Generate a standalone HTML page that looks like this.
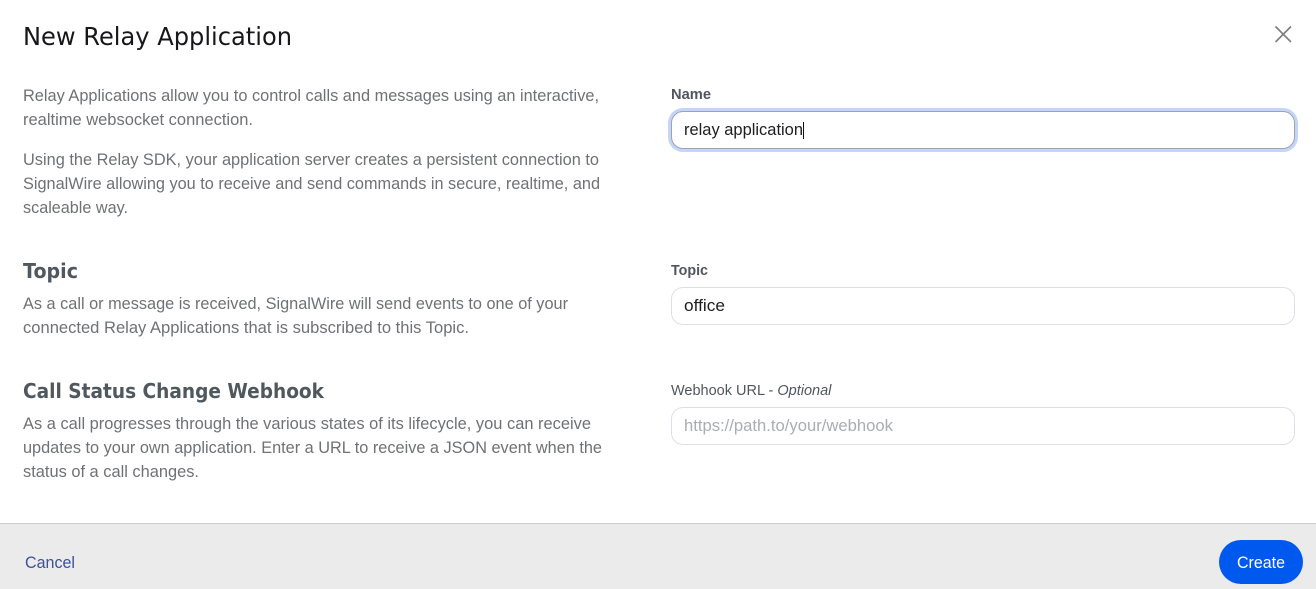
<!DOCTYPE html>
<html lang="en">
<head>
<meta charset="utf-8">
<title>New Relay Application</title>
<style>
html,body{margin:0;padding:0;width:1316px;height:589px;overflow:hidden;background:#fff}
.box{position:absolute;left:671px;width:624px;height:38px;box-sizing:border-box;border:1px solid #dcdfe5;border-radius:12px;background:#fff}
#focus{top:111px;border:1px solid #a0a2ae;box-shadow:0 0 0 3px #c3d5f8}
#caret{position:absolute;left:803px;top:122px;width:1px;height:17px;background:#111}
#footer{position:absolute;left:0;top:523px;width:1316px;height:66px;box-sizing:border-box;background:#ebebeb;border-top:1px solid #cdcdcd}
#btn{position:absolute;left:1219px;top:540px;width:84px;height:44px;border-radius:22px;background:#0059ee}
svg{position:absolute;left:0;top:0}
text{font-family:"Liberation Sans",sans-serif;font-size:16.5px;fill:#6f7175}
.h{font-family:"DejaVu Sans","Liberation Sans",sans-serif;font-weight:700;font-size:20px;fill:#50585f}
.l{font-size:14.5px;font-weight:700;fill:#50565f}
.v{fill:#1e1e20}
</style>
</head>
<body>
<div class="box" id="focus"></div>
<div id="caret"></div>
<div class="box" style="top:287px"></div>
<div class="box" style="top:407px"></div>
<div id="footer"></div>
<div id="btn"></div>
<svg width="1316" height="589" viewBox="0 0 1316 589" xmlns="http://www.w3.org/2000/svg">
<text x="23" y="45" textLength="269" lengthAdjust="spacingAndGlyphs" style="font-family:'DejaVu Sans',sans-serif;font-size:25px;fill:#17171a">New Relay Application</text>
<path d="M1275.500 26.500L1291 42M1291 26.500L1275.500 42" stroke="#808080" stroke-width="1.700" fill="none"/>

<text x="23" y="101" textLength="576" lengthAdjust="spacingAndGlyphs">Relay Applications allow you to control calls and messages using an interactive,</text>
<text x="23" y="125" textLength="230" lengthAdjust="spacingAndGlyphs">realtime websocket connection.</text>
<text x="23" y="165" textLength="576" lengthAdjust="spacingAndGlyphs">Using the Relay SDK, your application server creates a persistent connection to</text>
<text x="23" y="189" textLength="577" lengthAdjust="spacingAndGlyphs">SignalWire allowing you to receive and send commands in secure, realtime, and</text>
<text x="23" y="213" textLength="105" lengthAdjust="spacingAndGlyphs">scaleable way.</text>

<text class="h" x="23" y="278" textLength="55" lengthAdjust="spacingAndGlyphs">Topic</text>
<text x="23" y="309" textLength="545" lengthAdjust="spacingAndGlyphs">As a call or message is received, SignalWire will send events to one of your</text>
<text x="23" y="333" textLength="446" lengthAdjust="spacingAndGlyphs">connected Relay Applications that is subscribed to this Topic.</text>

<text class="h" x="23" y="398" textLength="301" lengthAdjust="spacingAndGlyphs">Call Status Change Webhook</text>
<text x="23" y="429" textLength="568" lengthAdjust="spacingAndGlyphs">As a call progresses through the various states of its lifecycle, you can receive</text>
<text x="23" y="453" textLength="579" lengthAdjust="spacingAndGlyphs">updates to your own application. Enter a URL to receive a JSON event when the</text>
<text x="23" y="477" textLength="176" lengthAdjust="spacingAndGlyphs">status of a call changes.</text>

<text class="l" x="671" y="99" textLength="40" lengthAdjust="spacingAndGlyphs">Name</text>
<text class="v" x="684" y="135" textLength="119" lengthAdjust="spacingAndGlyphs">relay application</text>
<text class="l" x="671" y="275" textLength="37" lengthAdjust="spacingAndGlyphs">Topic</text>
<text class="v" x="684" y="311" textLength="41" lengthAdjust="spacingAndGlyphs">office</text>
<text x="671" y="395" style="font-size:14.5px;fill:#50565f">Webhook URL - <tspan font-style="italic">Optional</tspan></text>
<text x="684" y="431" textLength="209" lengthAdjust="spacingAndGlyphs" style="fill:#a9adb4">https://path.to/your/webhook</text>

<text x="25" y="568" textLength="50" lengthAdjust="spacingAndGlyphs" style="fill:#3d5196">Cancel</text>
<text x="1237" y="568" textLength="48" lengthAdjust="spacingAndGlyphs" style="fill:#fff">Create</text>
</svg>
</body>
</html>
